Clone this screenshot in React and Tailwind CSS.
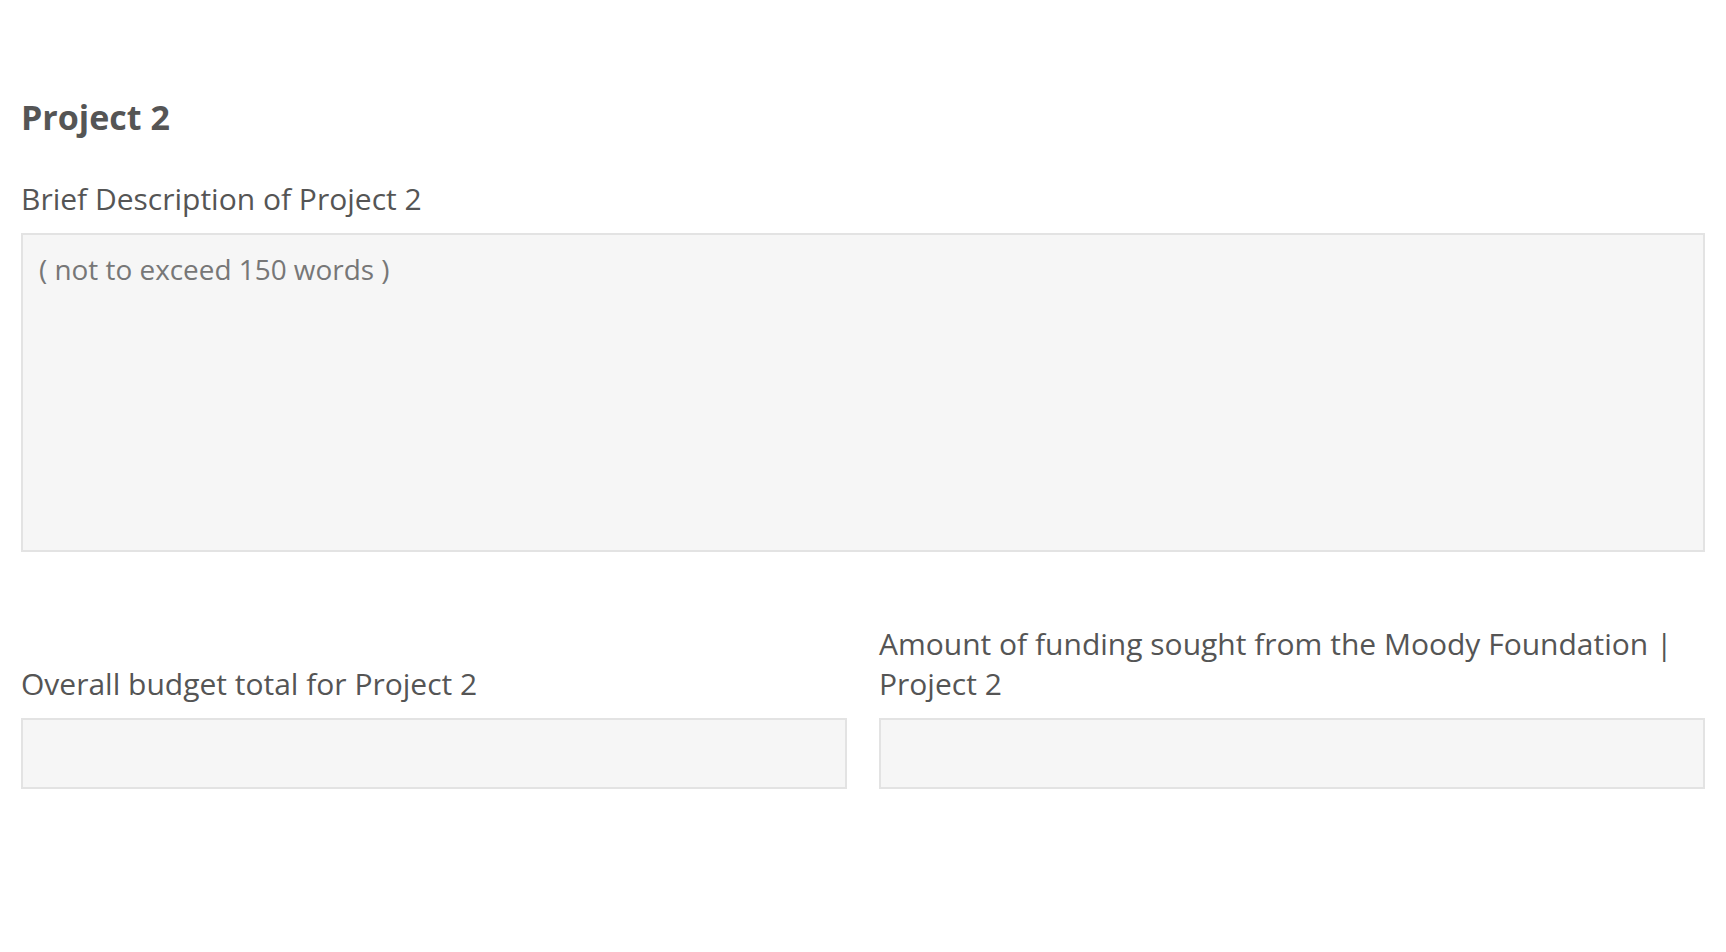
export default function App() {
  return (
    <div className="min-h-screen bg-white px-[21px] pt-[97px] text-[#555555]" style={{ fontFamily: '"Open Sans", "Liberation Sans", sans-serif' }}>
      <h2 className="text-[34px] font-bold leading-[41px]">Project 2</h2>

      <div className="mt-[41px]">
        <label className="block text-[30px] leading-[40px]">Brief Description of Project 2</label>
        <textarea
          className="mt-[14px] block h-[319px] w-full resize-none border-2 border-[#e3e3e3] bg-[#f6f6f6] px-[16px] pt-[14px] pb-[13px] text-[27.9px] leading-[40px] text-[#555555] outline-none placeholder:text-[#777777]"
          placeholder="( not to exceed 150 words )"
        />
      </div>

      <div className="mt-[72px] grid grid-cols-2 items-end gap-x-8">
        <div>
          <label className="block text-[30px] leading-[40px]">Overall budget total for Project 2</label>
          <input className="mt-[14px] block h-[71px] w-full border-2 border-[#e3e3e3] bg-[#f6f6f6] px-4 outline-none" />
        </div>
        <div>
          <label className="block text-[30px] leading-[40px]">Amount of funding sought from the Moody Foundation | Project 2</label>
          <input className="mt-[14px] block h-[71px] w-full border-2 border-[#e3e3e3] bg-[#f6f6f6] px-4 outline-none" />
        </div>
      </div>
    </div>
  )
}
